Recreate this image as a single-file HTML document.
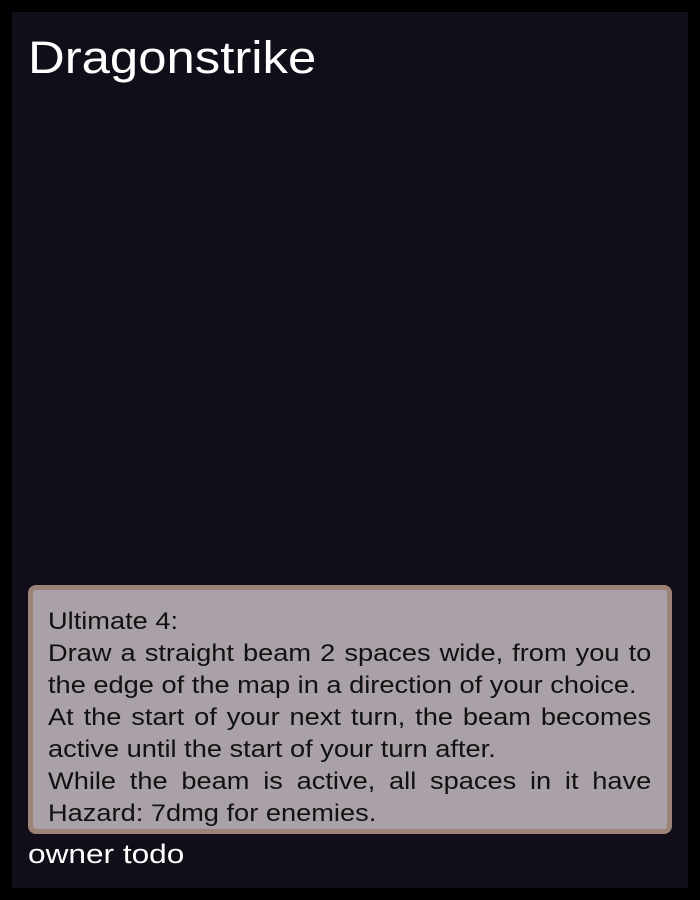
<!DOCTYPE html>
<html><head><style>
html,body{margin:0;padding:0;background:#000;width:700px;height:900px;overflow:hidden}
.card{position:absolute;left:12px;top:12px;width:676px;height:876px;background:#110d19;font-family:"Liberation Sans",sans-serif;color:#fff}
h1{position:absolute;left:16px;top:18px;margin:0;font-weight:normal;font-size:45px;line-height:56px;transform:scaleX(1.13);transform-origin:left}
.box{position:absolute;left:16px;top:573px;width:604px;height:239px;border:5px solid #9b8378;border-radius:8px;background:#a9a0a8;color:#111;font-size:24px;line-height:32px;padding:0 15px}
.box p{margin:16px 0 0 0;text-align:justify;width:532px;transform:scaleX(1.134);transform-origin:left}
.owner{position:absolute;left:16px;top:825px;font-size:27px;line-height:34px;transform:scaleX(1.17);transform-origin:left}
</style></head><body>
<div class="card">
<h1>Dragonstrike</h1>
<div class="box"><p>Ultimate 4:<br>Draw a straight beam 2 spaces wide, from you to the edge of the map in a direction of your choice.<br>At the start of your next turn, the beam becomes active until the start of your turn after.<br>While the beam is active, all spaces in it have Hazard: 7dmg for enemies.</p></div>
<div class="owner">owner todo</div>
</div>
</body></html>
